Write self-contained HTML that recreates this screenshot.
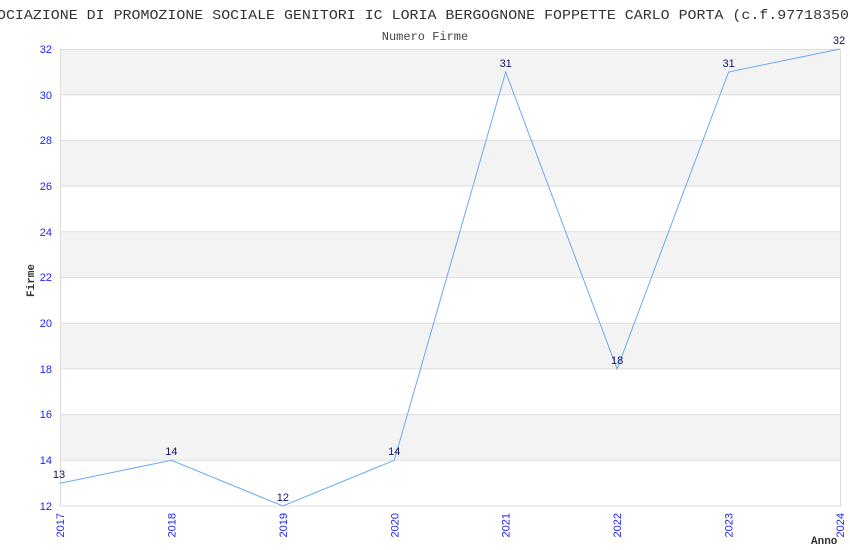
<!DOCTYPE html>
<html><head><meta charset="utf-8"><style>
html,body{margin:0;padding:0;background:#fff;width:850px;height:550px;overflow:hidden}
svg{display:block}
</style></head><body>
<svg width="850" height="550" xmlns="http://www.w3.org/2000/svg">
<text x="-3" y="19" font-family="Liberation Mono, monospace" font-size="14" fill="#333" textLength="852" lengthAdjust="spacingAndGlyphs">OCIAZIONE DI PROMOZIONE SOCIALE GENITORI IC LORIA BERGOGNONE FOPPETTE CARLO PORTA (c.f.97718350</text>
<text x="425" y="40" text-anchor="middle" font-family="Liberation Mono, monospace" font-size="12" fill="#444">Numero Firme</text>
<g fill="#f3f3f3">
<rect x="60" y="49" width="780" height="45.7"/>
<rect x="60" y="140.4" width="780" height="45.7"/>
<rect x="60" y="231.8" width="780" height="45.7"/>
<rect x="60" y="323.2" width="780" height="45.7"/>
<rect x="60" y="414.6" width="780" height="45.7"/>
</g>
<g stroke="#ddd" stroke-width="1">
<line x1="60" y1="94.7" x2="840" y2="94.7"/><line x1="60" y1="140.4" x2="840" y2="140.4"/>
<line x1="60" y1="186.1" x2="840" y2="186.1"/><line x1="60" y1="231.8" x2="840" y2="231.8"/>
<line x1="60" y1="277.5" x2="840" y2="277.5"/><line x1="60" y1="323.2" x2="840" y2="323.2"/>
<line x1="60" y1="368.9" x2="840" y2="368.9"/><line x1="60" y1="414.6" x2="840" y2="414.6"/>
<line x1="60" y1="460.3" x2="840" y2="460.3"/>
<rect x="60.5" y="49.5" width="780" height="456.5" fill="none"/>
</g>
<g font-family="Liberation Sans, sans-serif" font-size="11" fill="#22f" text-anchor="end">
<text x="52" y="53">32</text><text x="52" y="99">30</text><text x="52" y="144">28</text><text x="52" y="190">26</text>
<text x="52" y="236">24</text><text x="52" y="281">22</text><text x="52" y="327">20</text><text x="52" y="373">18</text>
<text x="52" y="418">16</text><text x="52" y="464">14</text><text x="52" y="510">12</text>
</g>
<g font-family="Liberation Sans, sans-serif" font-size="11" fill="#22f" text-anchor="end">
<text transform="translate(64,513) rotate(-90)">2017</text>
<text transform="translate(175.4,513) rotate(-90)">2018</text>
<text transform="translate(286.9,513) rotate(-90)">2019</text>
<text transform="translate(398.3,513) rotate(-90)">2020</text>
<text transform="translate(509.7,513) rotate(-90)">2021</text>
<text transform="translate(621.1,513) rotate(-90)">2022</text>
<text transform="translate(732.6,513) rotate(-90)">2023</text>
<text transform="translate(844,513) rotate(-90)">2024</text>
</g>
<text transform="translate(34,297) rotate(-90)" font-family="Liberation Mono, monospace" font-size="11" font-weight="bold" fill="#333">Firme</text>
<text x="811" y="544" font-family="Liberation Mono, monospace" font-size="11" font-weight="bold" fill="#333">Anno</text>
<polyline fill="none" stroke="#6aaaf0" stroke-width="1" points="60,483.2 171.4,460.3 282.9,506 394.3,460.3 505.7,72 617.1,368.9 728.6,72 840,49"/>
<g font-family="Liberation Sans, sans-serif" font-size="11" fill="#116" text-anchor="middle">
<text x="59" y="478">13</text><text x="171.4" y="455">14</text><text x="282.9" y="501">12</text>
<text x="394.3" y="455">14</text><text x="505.7" y="67">31</text><text x="617.1" y="364">18</text>
<text x="728.6" y="67">31</text><text x="839" y="44">32</text>
</g>
</svg>
</body></html>
